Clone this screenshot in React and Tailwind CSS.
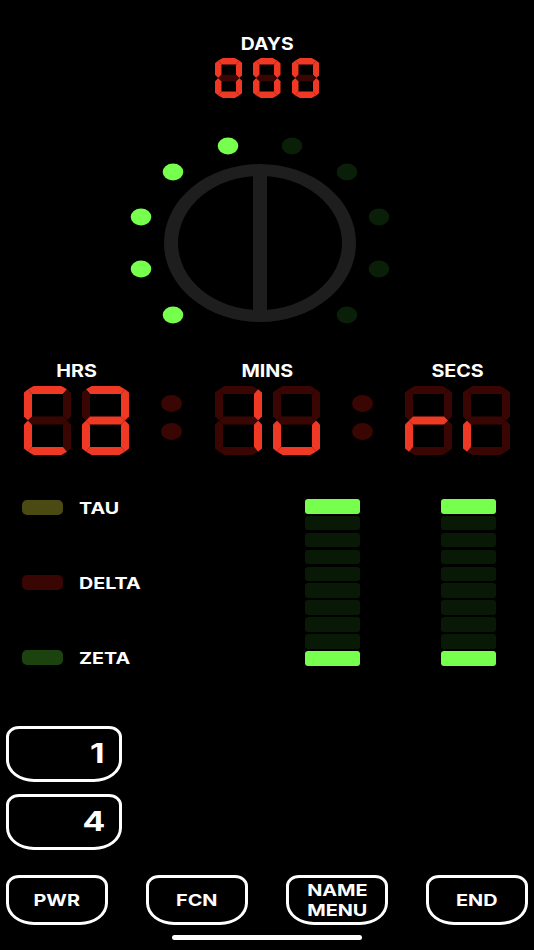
const RED = '#F03925';
const RED_DIM = '#3A0603';
const GREEN = '#77FF4D';
const GREEN_DIM = '#0A1F07';

const segments = (w, h, t) => {
  const c = t / 2;
  const m = h / 2;
  const cut = t * 0.2;
  const top = t + cut;
  const side = t - cut;
  return {
    a: [[top, 0], [w - top, 0], [w - c, c - cut / 2], [w - t, t], [t, t], [c, c - cut / 2]],
    b: [[w, side], [w, m - c], [w - c, m], [w - t, m - c], [w - t, t], [w - c, c - cut / 2]],
    c: [[w, m + c], [w, h - side], [w - c, h - c + cut / 2], [w - t, h - t], [w - t, m + c], [w - c, m]],
    d: [[t, h - t], [w - t, h - t], [w - c, h - c + cut / 2], [w - top, h], [top, h], [c, h - c + cut / 2]],
    e: [[0, m + c], [c, m], [t, m + c], [t, h - t], [c, h - c + cut / 2], [0, h - side]],
    f: [[0, side], [c, c - cut / 2], [t, t], [t, m - c], [c, m], [0, m - c]],
    g: [[t, m - c], [w - t, m - c], [w - c, m], [w - t, m + c], [t, m + c], [c, m]],
  };
};

const Digit = ({ lit, w = 47, h = 69, t = 8 }) => {
  const segs = segments(w, h, t);
  return (
    <svg width={w} height={h} viewBox={`0 0 ${w} ${h}`} className="block shrink-0">
      {Object.keys(segs).map((k) => (
        <polygon
          key={k}
          points={segs[k].map((p) => p.join(',')).join(' ')}
          fill={lit.includes(k) ? RED : RED_DIM}
        />
      ))}
    </svg>
  );
};

const Dial = () => {
  const dots = [
    [98, 10, true], [162, 10, false],
    [43, 36, true], [217, 36, false],
    [11, 81, true], [249, 81, false],
    [11, 133, true], [249, 133, false],
    [43, 179, true], [217, 179, false],
  ];
  return (
    <svg width="260" height="190" viewBox="0 0 260 190" className="ml-[130px] block">
      {dots.map(([x, y, on], i) => (
        <ellipse key={i} cx={x} cy={y} rx="10.3" ry="8.5" fill={on ? GREEN : GREEN_DIM} />
      ))}
      <ellipse cx="130" cy="107" rx="96" ry="79" fill="#1E1E1E" />
      <ellipse cx="130" cy="107" rx="82" ry="67" fill="#000" />
      <rect x="123" y="32" width="14" height="150" fill="#1E1E1E" />
    </svg>
  );
};

const TimeGroup = ({ label, digits }) => (
  <div className="flex w-[105px] flex-col items-center">
    <div className="flex h-5 items-center text-[17px] leading-5">
      <span className="inline-block scale-x-[1.16] font-bold text-white">{label}</span>
    </div>
    <div className="mt-[5px] flex w-full justify-between">
      <Digit lit={digits[0]} />
      <Digit lit={digits[1]} />
    </div>
  </div>
);

const Colon = () => (
  <div className="mb-[15px] flex flex-col gap-[11px]">
    <div className="h-[17px] w-[21px] rounded-[50%] bg-[#3A0603]" />
    <div className="h-[17px] w-[21px] rounded-[50%] bg-[#3A0603]" />
  </div>
);

const BarColumn = () => (
  <div className="flex w-[55px] flex-col gap-[2.3px]">
    {[0, 1, 2, 3, 4, 5, 6, 7, 8, 9].map((i) => (
      <div
        key={i}
        className={`h-[14.6px] rounded-[3px] ${i === 0 || i === 9 ? 'bg-[#77FF4D]' : 'bg-[#081A05]'}`}
      />
    ))}
  </div>
);

const Indicator = ({ color, label }) => (
  <div className="flex h-[15px] items-center">
    <div className={`h-[15px] w-[41px] rounded-[5px] ${color}`} />
    <div className="ml-[16px] w-[70px] text-[16px] leading-5">
      <span className="inline-block origin-left scale-x-[1.23] font-bold text-white">{label}</span>
    </div>
  </div>
);

const shape = 'rounded-[13px_13px_28px_28px/11px_11px_22px_22px] border-[3.5px] border-white';

const NumberButton = ({ value }) => (
  <div className={`flex h-[56px] w-[116px] items-center justify-end pr-[14px] ${shape}`}>
    <span className="inline-block origin-right scale-x-[1.25] text-[27px] leading-8 font-bold text-white">{value}</span>
  </div>
);

const FnButton = ({ lines }) => (
  <div className={`flex h-[50px] w-[102px] flex-col items-center justify-center text-center text-[16px] leading-[20px] ${shape}`}>
    {lines.map((line) => (
      <span key={line} className="inline-block scale-x-[1.24] font-bold text-white">{line}</span>
    ))}
  </div>
);

export default function App() {
  return (
    <div className="h-[950px] w-full overflow-hidden bg-black pt-[34px] font-['Inter','Liberation_Sans',sans-serif]">
      <div className="flex flex-col items-center">
        <div className="flex h-5 items-center text-[17px] leading-5">
          <span className="inline-block scale-x-[1.14] font-bold text-white">DAYS</span>
        </div>
        <div className="mt-[4px] flex gap-[11px]">
          <Digit lit="abcdef" w={27.5} h={40} t={6.5} />
          <Digit lit="abcdef" w={27.5} h={40} t={6.5} />
          <Digit lit="abcdef" w={27.5} h={40} t={6.5} />
        </div>
      </div>

      <div className="mt-[38px]">
        <Dial />
      </div>

      <div className="mt-[35px] flex items-end justify-between px-[24px]">
        <TimeGroup label="HRS" digits={['adef', 'abcdeg']} />
        <Colon />
        <TimeGroup label="MINS" digits={['bc', 'cde']} />
        <Colon />
        <TimeGroup label="SECS" digits={['eg', 'e']} />
      </div>

      <div className="mt-[44px] flex pl-[22px]">
        <div className="flex w-[283px] flex-col gap-[60px] pt-px">
          <Indicator color="bg-[#4A4A12]" label="TAU" />
          <Indicator color="bg-[#3A0603]" label="DELTA" />
          <Indicator color="bg-[#1C4210]" label="ZETA" />
        </div>
        <div className="flex gap-[81px]">
          <BarColumn />
          <BarColumn />
        </div>
      </div>

      <div className="mt-[60px] flex flex-col gap-[12px] pl-[6px]">
        <NumberButton value="1" />
        <NumberButton value="4" />
      </div>

      <div className="mt-[25px] flex justify-between px-[6px]">
        <FnButton lines={['PWR']} />
        <FnButton lines={['FCN']} />
        <FnButton lines={['NAME', 'MENU']} />
        <FnButton lines={['END']} />
      </div>

      <div className="mx-auto mt-[10px] h-[5.5px] w-[190px] rounded-full bg-white" />
    </div>
  );
}
